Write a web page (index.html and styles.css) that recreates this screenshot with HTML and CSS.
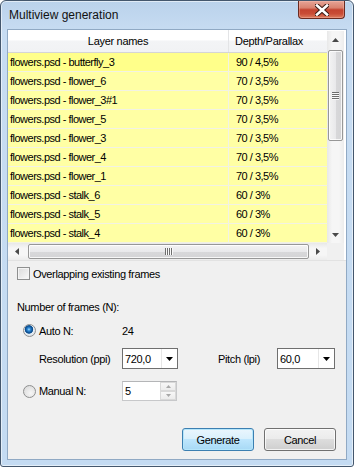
FILE: index.html
```html
<!DOCTYPE html>
<html lang="en">
<head>
    <meta charset="UTF-8">
    <meta name="viewport" content="width=device-width, initial-scale=1.0">
    <title>Multiview generation</title>
    <link rel="stylesheet" href="styles.css">
</head>
<body>
    <div class="window">
        <div class="titlebar">
            <span class="title">Multiview generation</span>
            <div class="close">
                <svg width="14" height="12" viewBox="0 0 14 12">
                    <path d="M2 1.5 L12 10.5 M12 1.5 L2 10.5" stroke="#3b1a14" stroke-width="4.6" stroke-linecap="square"/>
                    <path d="M2 1.5 L12 10.5 M12 1.5 L2 10.5" stroke="#ffffff" stroke-width="2.6" stroke-linecap="square"/>
                </svg>
            </div>
        </div>

        <div class="client">
            <div class="list">
                <div class="table">
                    <div class="head">
                        <div class="hc c1 center">Layer names</div>
                        <div class="hc c2">Depth/Parallax</div>
                    </div>
                    <div class="row first"><div class="cell c1">flowers.psd - butterfly_3</div><div class="cell c2">90 / 4,5%</div></div>
                    <div class="row"><div class="cell c1">flowers.psd - flower_6</div><div class="cell c2">70 / 3,5%</div></div>
                    <div class="row"><div class="cell c1">flowers.psd - flower_3#1</div><div class="cell c2">70 / 3,5%</div></div>
                    <div class="row"><div class="cell c1">flowers.psd - flower_5</div><div class="cell c2">70 / 3,5%</div></div>
                    <div class="row"><div class="cell c1">flowers.psd - flower_3</div><div class="cell c2">70 / 3,5%</div></div>
                    <div class="row"><div class="cell c1">flowers.psd - flower_4</div><div class="cell c2">70 / 3,5%</div></div>
                    <div class="row"><div class="cell c1">flowers.psd - flower_1</div><div class="cell c2">70 / 3,5%</div></div>
                    <div class="row"><div class="cell c1">flowers.psd - stalk_6</div><div class="cell c2">60 / 3%</div></div>
                    <div class="row"><div class="cell c1">flowers.psd - stalk_5</div><div class="cell c2">60 / 3%</div></div>
                    <div class="row"><div class="cell c1">flowers.psd - stalk_4</div><div class="cell c2">60 / 3%</div></div>
                </div>

                <div class="vscroll">
                    <div class="sbtn"><svg width="7" height="4" viewBox="0 0 7 4"><polygon points="0,4 7,4 3.5,0" fill="#4a4a4a"/></svg></div>
                    <div class="vthumb">
                        <div class="vgrip"><i></i><i></i><i></i><i></i></div>
                    </div>
                    <div class="vtrack"></div>
                    <div class="sbtn"><svg width="7" height="4" viewBox="0 0 7 4"><polygon points="0,0 7,0 3.5,4" fill="#4a4a4a"/></svg></div>
                </div>

                <div class="hscroll">
                    <div class="sbtn"><svg width="4" height="7" viewBox="0 0 4 7"><polygon points="4,0 4,7 0,3.5" fill="#4a4a4a"/></svg></div>
                    <div class="hthumb">
                        <div class="hgrip"><i></i><i></i><i></i><i></i></div>
                    </div>
                    <div class="sbtn"><svg width="4" height="7" viewBox="0 0 4 7"><polygon points="0,0 0,7 4,3.5" fill="#4a4a4a"/></svg></div>
                </div>
                <div class="corner"></div>
            </div>

            <div class="options">
                <div class="check-row">
                    <span class="checkbox"></span>
                    <span>Overlapping existing frames</span>
                </div>

                <div class="group-label">Number of frames (N):</div>

                <div class="radio-row auto">
                    <span class="radio checked"></span>
                    <span class="opt-label">Auto N:</span>
                    <span>24</span>
                </div>

                <div class="res-row">
                    <span class="opt-label">Resolution (ppi)</span>
                    <div class="combo res">
                        <span class="combo-text">720,0</span>
                        <span class="combo-btn"><svg width="7" height="4" viewBox="0 0 7 4"><polygon points="0,0 7,0 3.5,4" fill="#000"/></svg></span>
                    </div>
                    <span class="pitch-label">Pitch (lpi)</span>
                    <div class="combo pitch">
                        <span class="combo-text">60,0</span>
                        <span class="combo-btn"><svg width="7" height="4" viewBox="0 0 7 4"><polygon points="0,0 7,0 3.5,4" fill="#000"/></svg></span>
                    </div>
                </div>

                <div class="radio-row manual">
                    <span class="radio"></span>
                    <span class="opt-label">Manual N:</span>
                    <div class="spin">
                        <span class="spin-text">5</span>
                        <div class="spin-btns">
                            <span class="spin-btn"><svg width="5" height="3" viewBox="0 0 5 3"><polygon points="0,3 5,3 2.5,0" fill="#a8a8a8"/></svg></span>
                            <span class="spin-btn"><svg width="5" height="3" viewBox="0 0 5 3"><polygon points="0,0 5,0 2.5,3" fill="#a8a8a8"/></svg></span>
                        </div>
                    </div>
                </div>

                <div class="buttons">
                    <button class="btn default">Generate</button>
                    <button class="btn">Cancel</button>
                </div>
            </div>
        </div>
    </div>
</body>
</html>
```

FILE: styles.css
```css
body {
    margin: 0;
    background-color: #ffffff;
    font-family: "Liberation Sans", Arial, sans-serif;
}

.window {
    width: 354px;
    height: 467px;
    box-sizing: border-box;
    border: 1px solid #44576d;
    border-radius: 6px 6px 3px 3px;
    background: linear-gradient(to bottom, #bad2eb, #c7dcf2 30px, #c4dbf2);
    box-shadow: inset 0 0 0 1px rgba(255, 255, 255, 0.55);
    display: flex;
    flex-direction: column;
    overflow: hidden;
}

.titlebar {
    height: 28px;
    flex: none;
    display: flex;
    justify-content: space-between;
    align-items: flex-start;
}

.title {
    padding-left: 8px;
    line-height: 28px;
    font-size: 12px;
    color: #111111;
}

.close {
    width: 45px;
    height: 17px;
    margin-right: 8px;
    border: 1px solid #6a2a20;
    border-top: none;
    border-radius: 0 0 4px 4px;
    background: linear-gradient(to bottom, #e6a496 0%, #d9826f 40%, #c4432f 52%, #c94c36 75%, #dc7c5e 100%);
    box-shadow: inset 0 0 0 1px rgba(255, 200, 190, 0.35);
    display: flex;
    justify-content: center;
    align-items: center;
}

.close svg {
    display: block;
    margin-top: 1px;
}

.client {
    flex: 1;
    margin: 0 6px 6px 6px;
    border: 1px solid #90a9c4;
    background-color: #f0f0f0;
    display: flex;
    flex-direction: column;
    font-size: 11px;
    letter-spacing: -0.35px;
    color: #000000;
}

/* list view */

.list {
    display: grid;
    grid-template-columns: 319px 17px;
    grid-template-rows: 213px 17px;
    padding-right: 2px;
    background-color: #ffffff;
    border-bottom: 1px solid #e2e2e2;
}

.table {
    overflow: hidden;
    letter-spacing: -0.5px;
}

.head {
    display: flex;
    height: 22px;
    border-bottom: 1px solid #d5d5d5;
    background: linear-gradient(to bottom, #ffffff 0%, #ffffff 45%, #f3f4f6 50%, #f1f2f4 100%);
}

.hc {
    line-height: 22px;
    box-sizing: border-box;
    letter-spacing: -0.3px;
}

.hc.center {
    text-align: center;
}

.hc.c2 {
    border-left: 1px solid #e3e4e6;
    padding-left: 6px;
}

.c1 {
    width: 220px;
    flex: none;
}

.c2 {
    width: 99px;
    flex: none;
}

.row {
    display: flex;
    height: 18px;
    border-bottom: 1px solid #f2f2e4;
    background-color: #ffffa4;
}

.row.first {
    background-color: #ffff8a;
}

.cell {
    line-height: 18px;
    box-sizing: border-box;
    white-space: nowrap;
}

.cell.c1 {
    padding-left: 2px;
}

.cell.c2 {
    border-left: 1px solid #f2f2e4;
    padding-left: 7px;
}

/* scrollbars */

.vscroll {
    margin-top: 1px;
    display: flex;
    flex-direction: column;
    background: linear-gradient(to right, #e8e8e8, #f6f6f6 30%, #f6f6f6 70%, #ececec);
}

.hscroll {
    display: flex;
    background: linear-gradient(to bottom, #e8e8e8, #f6f6f6 30%, #f6f6f6 70%, #ececec);
}

.sbtn {
    width: 17px;
    height: 17px;
    flex: none;
    display: flex;
    justify-content: center;
    align-items: center;
}

.sbtn svg {
    display: block;
}

.vthumb {
    margin: 2px 1px 0 1px;
    height: 89px;
    border: 1px solid #979797;
    border-radius: 2px;
    background: linear-gradient(to right, #f3f3f3, #e9e9eb 50%, #d8d8da 51%, #d4d4d6);
    box-shadow: inset 0 0 0 1px rgba(255, 255, 255, 0.8);
    display: flex;
    justify-content: center;
    align-items: center;
}

.vtrack {
    flex: 1;
}

.vgrip {
    display: flex;
    flex-direction: column;
    gap: 1px;
}

.vgrip i {
    display: block;
    width: 7px;
    height: 1px;
    background-color: #6e6e6e;
    border-bottom: 1px solid #fafafa;
    margin-bottom: -1px;
}

.hthumb {
    margin: 1px 0 1px 3px;
    width: 279px;
    border: 1px solid #979797;
    border-radius: 2px;
    background: linear-gradient(to bottom, #f3f3f3, #e9e9eb 50%, #d8d8da 51%, #d4d4d6);
    box-shadow: inset 0 0 0 1px rgba(255, 255, 255, 0.8);
    display: flex;
    justify-content: center;
    align-items: center;
}

.hgrip {
    display: flex;
    gap: 1px;
}

.hgrip i {
    display: block;
    width: 1px;
    height: 7px;
    background-color: #6e6e6e;
    border-right: 1px solid #fafafa;
    margin-right: -1px;
}

.corner {
    background-color: #f0f0f0;
}

/* options */

.options {
    flex: 1;
    display: flex;
    flex-direction: column;
    padding-left: 9px;
}

.check-row {
    margin-top: 6px;
    height: 13px;
    display: flex;
    align-items: center;
    gap: 3px;
}

.checkbox {
    width: 11px;
    height: 11px;
    border: 1px solid #8e8f8f;
    background: linear-gradient(135deg, #dadada, #f9f9f9);
    box-shadow: inset 0 0 0 1px #f4f4f4;
    flex: none;
}

.group-label {
    margin-top: 21px;
    line-height: 13px;
}

.radio-row {
    display: flex;
    align-items: center;
    margin-left: 6px;
}

.radio-row.auto {
    margin-top: 10px;
    height: 13px;
}

.radio-row.manual {
    margin-top: 12px;
    height: 20px;
}

.radio {
    width: 11px;
    height: 11px;
    flex: none;
    border: 1px solid #8e8f8f;
    border-radius: 50%;
    background: radial-gradient(circle at 60% 65%, #f6f6f6, #d6d6d6);
    margin-right: 3px;
}

.radio.checked {
    background: radial-gradient(circle at 45% 40%, #a8e0ff 0, #2e8ad8 1.5px, #0d4c8c 3.5px, #1d5f9e 4px, #e9eef3 4.6px, #cfd5db 100%);
}

.opt-label {
    width: 83px;
    flex: none;
}

.res-row {
    margin-top: 11px;
    margin-left: 22px;
    height: 21px;
    display: flex;
    align-items: center;
}

.combo {
    height: 21px;
    box-sizing: border-box;
    border: 1px solid #6f6f6f;
    background-color: #ffffff;
    display: flex;
    align-items: center;
}

.combo.res {
    width: 56px;
}

.combo.pitch {
    width: 58px;
}

.combo-text {
    flex: 1;
    padding-left: 2px;
}

.combo-btn {
    width: 15px;
    height: 19px;
    border-left: 1px solid #e6e6e6;
    display: flex;
    justify-content: center;
    align-items: center;
}

.combo-btn svg {
    display: block;
}

.pitch-label {
    margin-left: 40px;
    width: 59px;
    flex: none;
}

.spin {
    width: 55px;
    height: 20px;
    box-sizing: border-box;
    border: 1px solid #c7c8ca;
    border-top-color: #b4b5b7;
    background-color: #ffffff;
    display: flex;
}

.spin-text {
    flex: 1;
    padding-left: 2px;
    line-height: 18px;
}

.spin-btns {
    width: 16px;
    display: flex;
    flex-direction: column;
}

.spin-btn {
    flex: 1;
    box-sizing: border-box;
    border: 1px solid #d9d9d9;
    background: linear-gradient(to bottom, #f7f7f7, #ececec);
    display: flex;
    justify-content: center;
    align-items: center;
}

.spin-btn svg {
    display: block;
}

.buttons {
    margin-top: 27px;
    padding-right: 10px;
    display: flex;
    justify-content: flex-end;
    gap: 10px;
}

.btn {
    width: 72px;
    height: 23px;
    padding: 0;
    font-family: "Liberation Sans", Arial, sans-serif;
    font-size: 11px;
    letter-spacing: -0.35px;
    color: #000000;
    border: 1px solid #707070;
    border-radius: 3px;
    background: linear-gradient(to bottom, #f2f2f2 0%, #ebebeb 48%, #dddddd 50%, #cfcfcf 100%);
    box-shadow: inset 0 0 0 1px rgba(255, 255, 255, 0.75);
}

.btn.default {
    border-color: #3c7fb1;
    background: linear-gradient(to bottom, #eaf6fd 0%, #d9f0fc 48%, #bee6fd 50%, #a7d9f5 100%);
    box-shadow: inset 0 0 0 1px #b5e6fb;
}
```
